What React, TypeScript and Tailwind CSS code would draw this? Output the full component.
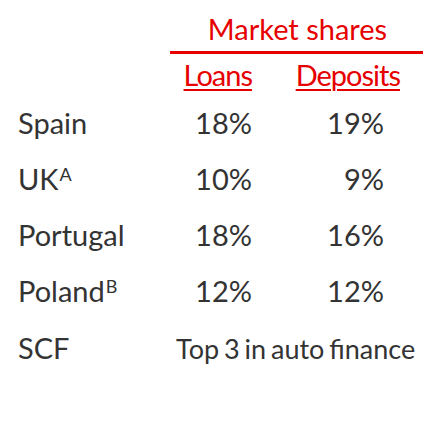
import React from "react";

const rows = [
  { name: "Spain", sup: "", loans: "18%", deposits: "19%" },
  { name: "UK", sup: "A", loans: "10%", deposits: "9%" },
  { name: "Portugal", sup: "", loans: "18%", deposits: "16%" },
  { name: "Poland", sup: "B", loans: "12%", deposits: "12%" },
];

export default function App() {
  return (
    <div className="w-[448px] h-[434px] bg-white text-[#333333] text-[29px] leading-none font-['Lato',sans-serif]">
      <div className="flex flex-col pl-[18px] pt-[14px]">
        {/* header */}
        <div className="flex">
          <div className="w-[152px]" />
          <div className="flex flex-col w-[253px] text-[#e60000]">
            <div className="text-center h-[37px] pl-[2px]">Market shares</div>
            <div className="h-[3px] bg-[#e60000]" />
            <div className="flex h-[35px] items-end tracking-[-1px]">
              <div className="w-[82px] text-right underline underline-offset-[3px] decoration-[2px]">Loans</div>
              <div className="w-[148px] text-right underline underline-offset-[3px] decoration-[2px]">Deposits</div>
            </div>
          </div>
        </div>
        {/* rows */}
        {rows.map((r) => (
          <div key={r.name} className="flex items-end h-[56px] pb-[8px] whitespace-nowrap">
            <div className="w-[152px]">
              {r.name}
              <span className="text-[18px] align-top relative top-[1px] ml-[1px]">{r.sup}</span>
            </div>
            <div className="w-[82px] text-right">{r.loans}</div>
            <div className="w-[132px] text-right">{r.deposits}</div>
          </div>
        ))}
        <div className="flex items-end h-[57px] pb-[8px] whitespace-nowrap">
          <div className="w-[158px]">SCF</div>
          <div className="text-[27px] [word-spacing:-2px]">Top 3 in auto finance</div>
        </div>
      </div>
    </div>
  );
}
